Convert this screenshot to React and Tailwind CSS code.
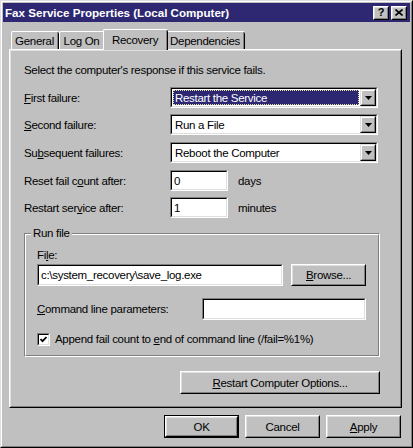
import React from "react";

const sans = "font-['Liberation_Sans',Arial,sans-serif] text-[11.5px] tracking-[-0.3px] leading-[14px]";

// raised 3d frame for push buttons
function Button({ children, className = "", isDefault = false }) {
  return (
    <div className={`${isDefault ? "border border-black" : ""} ${className}`}>
      <div className="h-full border border-t-white border-l-white border-r-black border-b-black">
        <div className="h-full border border-t-[#dfdfdf] border-l-[#dfdfdf] border-r-[#808080] border-b-[#808080] flex items-center justify-center text-black">
          {children}
        </div>
      </div>
    </div>
  );
}

// sunken edit box
function Field({ children, className = "" }) {
  return (
    <div className={`border border-t-[#808080] border-l-[#808080] border-r-white border-b-white ${className}`}>
      <div className="h-full border border-t-black border-l-black border-r-[#dfdfdf] border-b-[#dfdfdf] bg-white flex items-center pl-[2px] text-black overflow-hidden whitespace-nowrap">
        {children}
      </div>
    </div>
  );
}

function DownArrow() {
  return (
    <svg width="7" height="4" viewBox="0 0 7 4">
      <path d="M0 0 H7 L3.5 4 Z" fill="#000" />
    </svg>
  );
}

function Combo({ value, focused = false }) {
  return (
    <div className="w-[208px] h-[21px] border border-t-[#808080] border-l-[#808080] border-r-white border-b-white">
      <div className="h-full border border-t-black border-l-black border-r-[#dfdfdf] border-b-[#dfdfdf] bg-white flex">
        <div className="flex-1 p-px flex">
          <div
            className={`flex-1 flex items-center pl-px whitespace-nowrap ${
              focused
                ? "bg-[#2c2770] text-white border border-dotted border-[#e8e4a0]"
                : "text-black border border-transparent"
            }`}
          >
            {value}
          </div>
        </div>
        <div className="w-[16px] h-full border border-t-[#dfdfdf] border-l-[#dfdfdf] border-r-black border-b-black">
          <div className="h-full border border-t-white border-l-white border-r-[#808080] border-b-[#808080] bg-[#c0c0c0] flex items-center justify-center">
            <DownArrow />
          </div>
        </div>
      </div>
    </div>
  );
}

function Row({ label, children, className = "" }) {
  return (
    <div className={`flex items-center ${className}`}>
      <div className="w-[146px] whitespace-nowrap">{label}</div>
      {children}
    </div>
  );
}

function Tab({ label, selected = false, className = "" }) {
  if (selected) {
    return (
      <div className={`relative z-10 -mb-px -mx-[2px] h-[21px] bg-[#c0c0c0] border-t border-l border-t-white border-l-white rounded-tl-[2px] rounded-tr-[2px] flex ${className}`}>
        <div className="flex-1 flex border-r border-r-black rounded-tr-[2px]">
          <div className="flex-1 h-full flex justify-center pt-[3px] border-r border-r-[#808080] whitespace-nowrap">{label}</div>
        </div>
      </div>
    );
  }
  return (
    <div className={`h-[18px] border-t border-l border-t-white border-l-white rounded-tl-[2px] rounded-tr-[2px] flex ${className}`}>
      <div className="flex-1 flex border-r border-r-black rounded-tr-[2px]">
        <div className="flex-1 flex justify-center pt-[2px] border-r border-r-[#808080] whitespace-nowrap">{label}</div>
      </div>
    </div>
  );
}

function CaptionButton({ children }) {
  return (
    <div className="w-[16px] h-[14px] border border-t-white border-l-white border-r-black border-b-black bg-[#c0c0c0]">
      <div className="h-full border border-t-[#dfdfdf] border-l-[#dfdfdf] border-r-[#808080] border-b-[#808080] flex items-center justify-center">
        {children}
      </div>
    </div>
  );
}

export default function App() {
  return (
    <div className={`w-[413px] h-[448px] bg-[#c0c0c0] ${sans} text-black border border-t-[#dfdfdf] border-l-[#dfdfdf] border-r-black border-b-black`}>
      <div className="h-full border border-t-white border-l-white border-r-[#808080] border-b-[#808080] p-px flex flex-col">
        {/* caption */}
        <div className="h-[19px] bg-[#2d2871] flex items-center pl-[2px] pr-[3px]">
          <div className="flex-1 text-white font-bold text-[11.6px] tracking-normal whitespace-nowrap">
            Fax Service Properties (Local Computer)
          </div>
          <div className="flex gap-[2px]">
            <CaptionButton>
              <span className="font-bold text-[11px] leading-none">?</span>
            </CaptionButton>
            <CaptionButton>
              <svg width="8" height="7" viewBox="0 0 8 7">
                <path d="M0.5 0.5 L7.5 6.5 M7.5 0.5 L0.5 6.5" stroke="#000" strokeWidth="1.6" />
              </svg>
            </CaptionButton>
          </div>
        </div>

        {/* tabs */}
        <div className="mt-[7px] ml-[6px] pl-[2px] h-[20px] flex items-end">
          <Tab label="General" className="w-[48px]" />
          <Tab label="Log On" className="w-[46px]" />
          <Tab label="Recovery" selected className="w-[65px]" />
          <Tab label="Dependencies" className="w-[79px]" />
        </div>

        {/* page */}
        <div className="ml-[6px] w-[393px] h-[359px] border border-t-white border-l-white border-r-black border-b-black">
          <div className="h-full border border-t-[#dfdfdf] border-l-[#dfdfdf] border-r-[#808080] border-b-[#808080] pl-[13px] pr-[20px] flex flex-col">
            <div className="mt-[11px] h-[16px] flex items-center whitespace-nowrap">
              Select the computer's response if this service fails.
            </div>

            <Row className="mt-[9px]" label={<><u>F</u>irst failure:</>}>
              <Combo value="Restart the Service" focused />
            </Row>
            <Row className="mt-[6px]" label={<><u>S</u>econd failure:</>}>
              <Combo value="Run a File" />
            </Row>
            <Row className="mt-[7px]" label={<>Su<u>b</u>sequent failures:</>}>
              <Combo value="Reboot the Computer" />
            </Row>

            <Row className="mt-[7px]" label={<>Reset fail c<u>o</u>unt after:</>}>
              <Field className="w-[58px] h-[21px]">0</Field>
              <span className="ml-[10px]">days</span>
            </Row>
            <Row className="mt-[6px]" label={<>Restart ser<u>v</u>ice after:</>}>
              <Field className="w-[58px] h-[21px]">1</Field>
              <span className="ml-[10px]">minutes</span>
            </Row>

            {/* run file group */}
            <div className="relative mt-[15px] h-[124px] border border-t-[#808080] border-l-[#808080] border-r-white border-b-white">
              <span className="absolute -top-[8px] left-[6px] px-[2px] bg-[#c0c0c0]">Run file</span>
              <div className="h-full border border-t-white border-l-white border-r-[#808080] border-b-[#808080] pl-[11px] pr-[12px] flex flex-col">
                <div className="mt-[13px] h-[14px]">
                  Fi<u>l</u>e:
                </div>
                <div className="mt-[2px] flex items-center">
                  <Field className="w-[247px] h-[22px]">c:\system_recovery\save_log.exe</Field>
                  <Button className="ml-[8px] w-[75px] h-[22px]">
                    <span><u>B</u>rowse...</span>
                  </Button>
                </div>
                <div className="mt-[12px] flex items-center">
                  <div className="w-[165px] whitespace-nowrap">
                    <u>C</u>ommand line parameters:
                  </div>
                  <Field className="w-[164px] h-[22px]" />
                </div>
                <div className="mt-[12px] flex items-center">
                  <div className="w-[13px] h-[13px] border border-t-[#808080] border-l-[#808080] border-r-white border-b-white">
                    <div className="h-full border border-t-black border-l-black border-r-[#dfdfdf] border-b-[#dfdfdf] bg-white flex items-center justify-center">
                      <svg width="7" height="7" viewBox="0 0 7 7">
                        <path d="M0.5 3 L2.5 5.2 L6.5 1" stroke="#000" strokeWidth="1.8" fill="none" />
                      </svg>
                    </div>
                  </div>
                  <span className="ml-[5px] whitespace-nowrap">
                    Append fail count to <u>e</u>nd of command line (/fail=%1%)
                  </span>
                </div>
              </div>
            </div>

            <div className="mt-[14px] flex justify-end">
              <Button className="w-[200px] h-[23px]">
                <span><u>R</u>estart Computer Options...</span>
              </Button>
            </div>
          </div>
        </div>

        {/* dialog buttons */}
        <div className="mt-[7px] pr-[9px] flex justify-end gap-[6px]">
          <Button isDefault className="w-[75px] h-[23px]">OK</Button>
          <Button className="w-[75px] h-[23px]">Cancel</Button>
          <Button className="w-[75px] h-[23px]">
            <span><u>A</u>pply</span>
          </Button>
        </div>
      </div>
    </div>
  );
}
